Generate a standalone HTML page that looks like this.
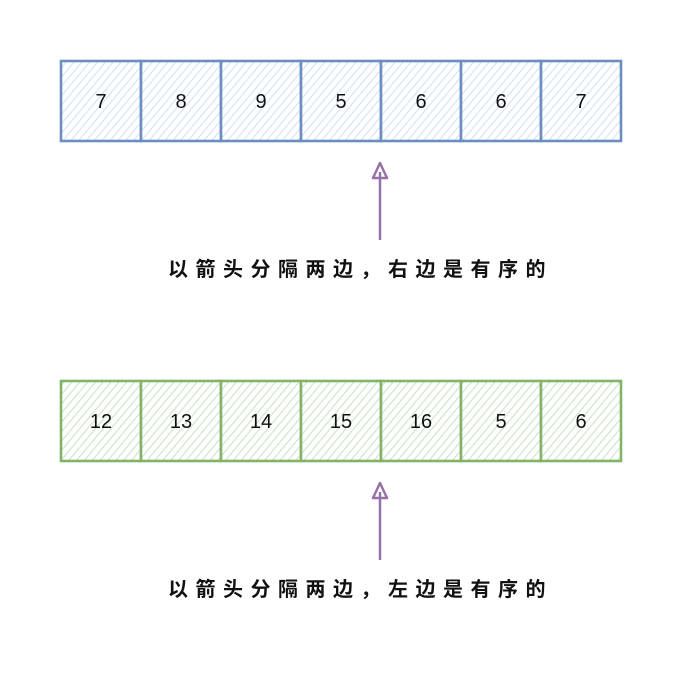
<!DOCTYPE html>
<html><head><meta charset="utf-8"><style>
html,body{margin:0;padding:0;background:#fff;}
</style></head><body>
<svg width="682" height="682" xmlns="http://www.w3.org/2000/svg">
<defs>
<pattern id="hb" width="6" height="6" patternUnits="userSpaceOnUse" patternTransform="rotate(40)">
<rect width="6" height="6" fill="#fff"/>
<line x1="0" y1="0" x2="0" y2="6" stroke="#d4e3fa" stroke-width="2.4"/>
</pattern>
<pattern id="hg" width="6" height="6" patternUnits="userSpaceOnUse" patternTransform="rotate(40)">
<rect width="6" height="6" fill="#fff"/>
<line x1="0" y1="0" x2="0" y2="6" stroke="#cfe5cd" stroke-width="2.4"/>
</pattern>
</defs>
<g stroke="#6c8ebf" stroke-width="2.6" fill="url(#hb)">
<rect x="61" y="61" width="80" height="80"/><rect x="141" y="61" width="80" height="80"/>
<rect x="221" y="61" width="80" height="80"/><rect x="301" y="61" width="80" height="80"/>
<rect x="381" y="61" width="80" height="80"/><rect x="461" y="61" width="80" height="80"/>
<rect x="541" y="61" width="80" height="80"/>
</g>
<g stroke="#82b366" stroke-width="2.6" fill="url(#hg)">
<rect x="61" y="381" width="80" height="80"/><rect x="141" y="381" width="80" height="80"/>
<rect x="221" y="381" width="80" height="80"/><rect x="301" y="381" width="80" height="80"/>
<rect x="381" y="381" width="80" height="80"/><rect x="461" y="381" width="80" height="80"/>
<rect x="541" y="381" width="80" height="80"/>
</g>
<g font-family="Liberation Sans, sans-serif" font-size="20" text-anchor="middle" fill="#111">
<text x="101" y="108">7</text><text x="181" y="108">8</text><text x="261" y="108">9</text>
<text x="341" y="108">5</text><text x="421" y="108">6</text><text x="501" y="108">6</text>
<text x="581" y="108">7</text>
<text x="101" y="428">12</text><text x="181" y="428">13</text><text x="261" y="428">14</text>
<text x="341" y="428">15</text><text x="421" y="428">16</text><text x="501" y="428">5</text>
<text x="581" y="428">6</text>
</g>
<g stroke="#9673a6" stroke-width="2.5" fill="none" stroke-linejoin="round">
<path d="M380 240 L380 172"/><path d="M373 178 L380 163 L387 178 Z"/>
<path d="M380 560 L380 492"/><path d="M373 498 L380 483 L387 498 Z"/>
</g>
<g font-family="Liberation Sans, Noto Sans CJK SC, sans-serif" font-size="20" font-weight="bold" fill="#111" letter-spacing="7.5">
<text x="168" y="276">以箭头分隔两边，右边是有序的</text>
<text x="168" y="596">以箭头分隔两边，左边是有序的</text>
</g>
</svg>
</body></html>
